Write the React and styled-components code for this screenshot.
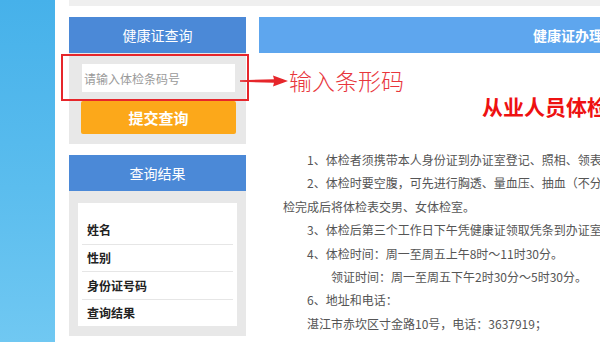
import React from "react";
import styled, { createGlobalStyle } from "styled-components";

const Global = createGlobalStyle`
  html, body { margin: 0; padding: 0; background: #fff; overflow: hidden; }
  body { font-family: "Noto Sans CJK SC", "Noto Sans", sans-serif; }
  * { box-sizing: border-box; }
`;

const Page = styled.div`
  position: relative;
  width: 600px;
  height: 342px;
  overflow: hidden;
  display: flex;
  align-items: flex-start;
  background: #fff;
`;

const LeftStrip = styled.div`
  flex: 0 0 55px;
  height: 342px;
  background: linear-gradient(180deg, #46b1ea 0%, #5bbdee 55%, #70c8f2 100%);
`;

const Main = styled.div`
  flex: 0 0 auto;
  width: 1000px;
  padding-left: 14px;
  display: flex;
  flex-direction: column;
`;

const TopBar = styled.div`
  flex: 0 0 6px;
  height: 6px;
  background: #efefef;
`;

const Columns = styled.div`
  display: flex;
  align-items: flex-start;
  padding-top: 11px;
  gap: 13px;
`;

const Sidebar = styled.div`
  flex: 0 0 177px;
  display: flex;
  flex-direction: column;
  gap: 11px;
`;

const PanelHeader = styled.div`
  height: 36px;
  background: #4b89d7;
  color: #fff;
  font-size: 14px;
  display: flex;
  align-items: center;
  justify-content: center;
`;

const PanelBody = styled.div`
  background: #e8e8e8;
  padding: ${(p) => p.$pad};
  display: flex;
  flex-direction: column;
  gap: ${(p) => p.$gap || "0px"};
`;

const Input = styled.input`
  display: block;
  width: 153px;
  height: 28px;
  margin-left: 1px;
  border: none;
  outline: none;
  background: #fff;
  padding: 0 2px;
  font-family: "Noto Sans CJK SC", sans-serif;
  font-size: 12px;
  color: #333;
  &::placeholder { color: #9a9a9a; }
`;

const SubmitButton = styled.button`
  width: 155px;
  height: 33px;
  border: none;
  border-radius: 2px;
  background: #fca81a;
  color: #fff;
  font-family: "Noto Sans CJK SC", sans-serif;
  font-size: 15px;
  font-weight: 700;
  padding: 0;
`;

const ResultBox = styled.div`
  background: #fff;
  padding: 13px 4px 0;
  height: 123px;
`;

const ResultRow = styled.div`
  height: 27.5px;
  display: flex;
  align-items: center;
  padding-left: 5px;
  font-size: 12px;
  font-weight: 700;
  color: #222;
  border-top: ${(p) => (p.$first ? "none" : "1px solid #e6e6e6")};
`;

const ContentCol = styled.div`
  flex: 0 0 700px;
  display: flex;
  flex-direction: column;
`;

const ContentHeader = styled.div`
  height: 36px;
  background: #5ea6ee;
  color: #fff;
  font-size: 14px;
  font-weight: 700;
  display: flex;
  align-items: center;
  padding-left: 274px;
  white-space: nowrap;
`;

const Title = styled.h2`
  margin: 0;
  padding: 40px 0 0 223px;
  height: 95px;
  font-size: 21px;
  line-height: 26px;
  font-weight: 700;
  color: #ee1111;
  white-space: nowrap;
`;

const Notes = styled.div`
  padding-left: 24px;
  font-size: 12px;
  line-height: 23.4px;
  color: #555;
  white-space: nowrap;
`;

const Para = styled.p`
  margin: 0;
  text-indent: ${(p) => p.$indent || "2em"};
`;

const Annotation = styled.div`
  position: absolute;
  left: 61px;
  top: 54px;
  width: 188px;
  height: 47px;
  border: 2px solid #e6262b;
`;

const ArrowSvg = styled.svg`
  position: absolute;
  left: 238px;
  top: 74px;
`;

const AnnoText = styled.div`
  position: absolute;
  left: 289px;
  top: 64px;
  font-size: 23px;
  line-height: 32px;
  font-weight: 300;
  color: #e8363c;
  white-space: nowrap;
`;

export default function App() {
  return (
    <>
      <Global />
      <Page>
        <LeftStrip />
        <Main>
          <TopBar />
          <Columns>
            <Sidebar>
              <div>
                <PanelHeader>健康证查询</PanelHeader>
                <PanelBody $pad="11px 10px 10px 12px" $gap="9px">
                  <Input placeholder="请输入体检条码号" />
                  <SubmitButton>提交查询</SubmitButton>
                </PanelBody>
              </div>
              <div>
                <PanelHeader>查询结果</PanelHeader>
                <PanelBody $pad="12px 9px 10px 9px">
                  <ResultBox>
                    <ResultRow $first>姓名</ResultRow>
                    <ResultRow>性别</ResultRow>
                    <ResultRow>身份证号码</ResultRow>
                    <ResultRow>查询结果</ResultRow>
                  </ResultBox>
                </PanelBody>
              </div>
            </Sidebar>
            <ContentCol>
              <ContentHeader>健康证办理流程</ContentHeader>
              <Title>从业人员体检须知</Title>
              <Notes>
                <Para>1、体检者须携带本人身份证到办证室登记、照相、领表。</Para>
                <Para>2、体检时要空腹，可先进行胸透、量血压、抽血（不分先后），体</Para>
                <Para $indent="0">检完成后将体检表交男、女体检室。</Para>
                <Para>3、体检后第三个工作日下午凭健康证领取凭条到办证室领证。</Para>
                <Para>4、体检时间：周一至周五上午8时～11时30分。</Para>
                <Para $indent="4em">领证时间：周一至周五下午2时30分～5时30分。</Para>
                <Para>6、地址和电话：</Para>
                <Para>湛江市赤坎区寸金路10号，电话：3637919；</Para>
              </Notes>
            </ContentCol>
          </Columns>
        </Main>
        <Annotation />
        <ArrowSvg width="52" height="14" viewBox="0 0 52 14">
          <polygon points="2,6.3 36,5.2 35,1.5 50,7 35,12.5 36,8.8 2,7.7" fill="#e6262b" />
        </ArrowSvg>
        <AnnoText>输入条形码</AnnoText>
      </Page>
    </>
  );
}
